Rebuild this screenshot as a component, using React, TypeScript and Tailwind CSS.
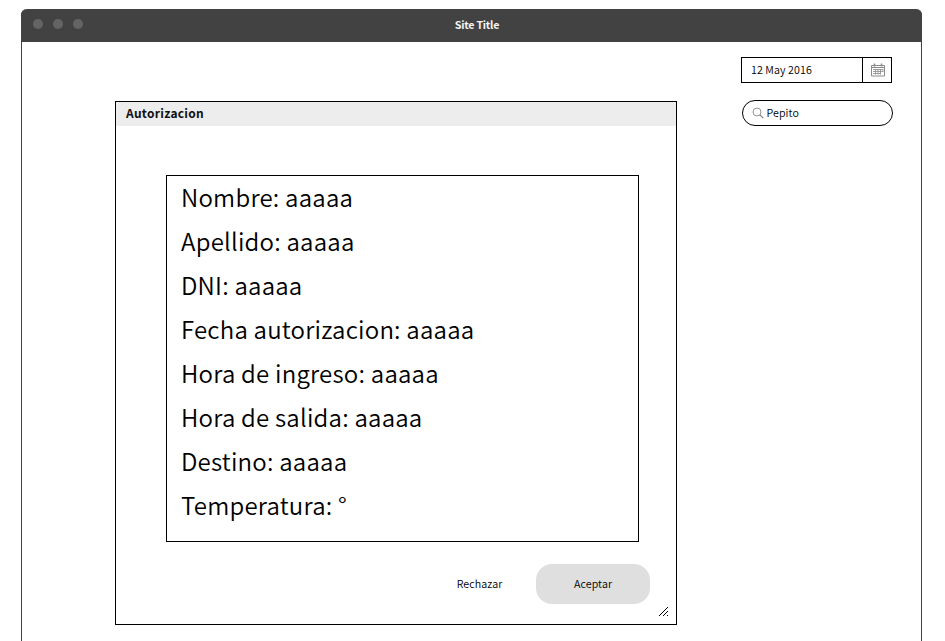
const rows = [
  'Nombre: aaaaa',
  'Apellido: aaaaa',
  'DNI: aaaaa',
  'Fecha autorizacion: aaaaa',
  'Hora de ingreso: aaaaa',
  'Hora de salida: aaaaa',
  'Destino: aaaaa',
  'Temperatura: °',
];

function CalendarIcon() {
  return (
    <svg width="14" height="14" viewBox="0 0 14 14" fill="none" stroke="#8a8a8a" strokeWidth="1">
      <path d="M.5 2.5h13v10.5H.5zM.5 4.5h13" />
      <path d="M3.5 .5v3M10.5 .5v3" strokeWidth="1.5" />
      <path d="M2 6.5h10M2 8.5h10M2 10.5h8M4.5 6v5.5M7 6v5.5M9.5 6v5.5M12 6v3" strokeWidth=".8" />
    </svg>
  );
}

function SearchIcon() {
  return (
    <svg width="12" height="12" viewBox="0 0 12 12" fill="none" stroke="#777" strokeWidth=".8">
      <circle cx="5" cy="5" r="4" />
      <path d="M7.9 7.9l3.4 3.2" strokeWidth="1.1" />
    </svg>
  );
}

export default function App() {
  return (
    <div className="h-[641px] w-[945px] overflow-hidden bg-white pt-[9px] pl-[21px] font-['Noto_Sans_CJK_SC','Noto_Sans',sans-serif] text-[10.7px] text-[#111]">
      <div className="h-[660px] w-[901px] rounded-t-[6px] border border-t-0 border-[#424242]">
        <header className="-mx-px grid h-[33px] grid-cols-3 items-center rounded-t-[6px] bg-[#424242] px-[11.5px]">
          <div className="-mt-[3px] flex gap-[10px]">
            <i className="size-[10px] rounded-full bg-[#646464]" />
            <i className="size-[10px] rounded-full bg-[#646464]" />
            <i className="size-[10px] rounded-full bg-[#646464]" />
          </div>
          <h1 className="pl-[11px] text-center font-bold tracking-[-0.25px] text-[#f4f4f4]">Site Title</h1>
        </header>
        <div className="flex">
          <main className="mt-[59px] ml-[93px] flex h-[524px] w-[562px] flex-col border border-black">
            <h2 className="h-[24px] shrink-0 bg-[#ededed] pl-[10px] text-[12px] leading-[22px] font-bold tracking-[0.28px]">Autorizacion</h2>
            <ul className="mt-[49px] ml-[50px] h-[367px] w-[473px] shrink-0 border border-black pl-[14px] text-[24px] leading-[44px] font-[350] tracking-[0.22px] whitespace-nowrap text-black">
              {rows.map((row) => (
                <li key={row} className="-mt-px mb-px">{row}</li>
              ))}
            </ul>
            <div className="mt-[22px] mr-[26px] flex justify-end font-[350] tracking-[0.08px] text-black">
              <button className="h-[40px] w-[114px] pl-px">Rechazar</button>
              <button className="h-[40px] w-[114px] rounded-[16px] bg-[#dfdfdf]">Aceptar</button>
            </div>
            <svg className="mt-[3px] mr-[8px] self-end" width="10" height="10" viewBox="0 0 10 10" stroke="#000" strokeWidth="1" shapeRendering="crispEdges">
              <path d="M.5 9.5l9-9M4.5 9.5l5-5M8.5 9.5l1-1" />
            </svg>
          </main>
          <aside className="mt-[15px] ml-[64px] w-[152px] font-[350] tracking-[0.08px] text-black">
            <div className="flex h-[26px] w-[151px] border border-black">
              <span className="flex-1 pl-[9px] leading-[23px]">12 May 2016</span>
              <span className="flex w-[29px] items-center justify-center border-l border-black pb-px pl-px">
                <CalendarIcon />
              </span>
            </div>
            <div className="mt-[17px] ml-px flex h-[26px] w-[151px] items-center gap-[2.5px] rounded-full border border-black pl-[9px]">
              <SearchIcon />
              <span>Pepito</span>
            </div>
          </aside>
        </div>
      </div>
    </div>
  );
}
